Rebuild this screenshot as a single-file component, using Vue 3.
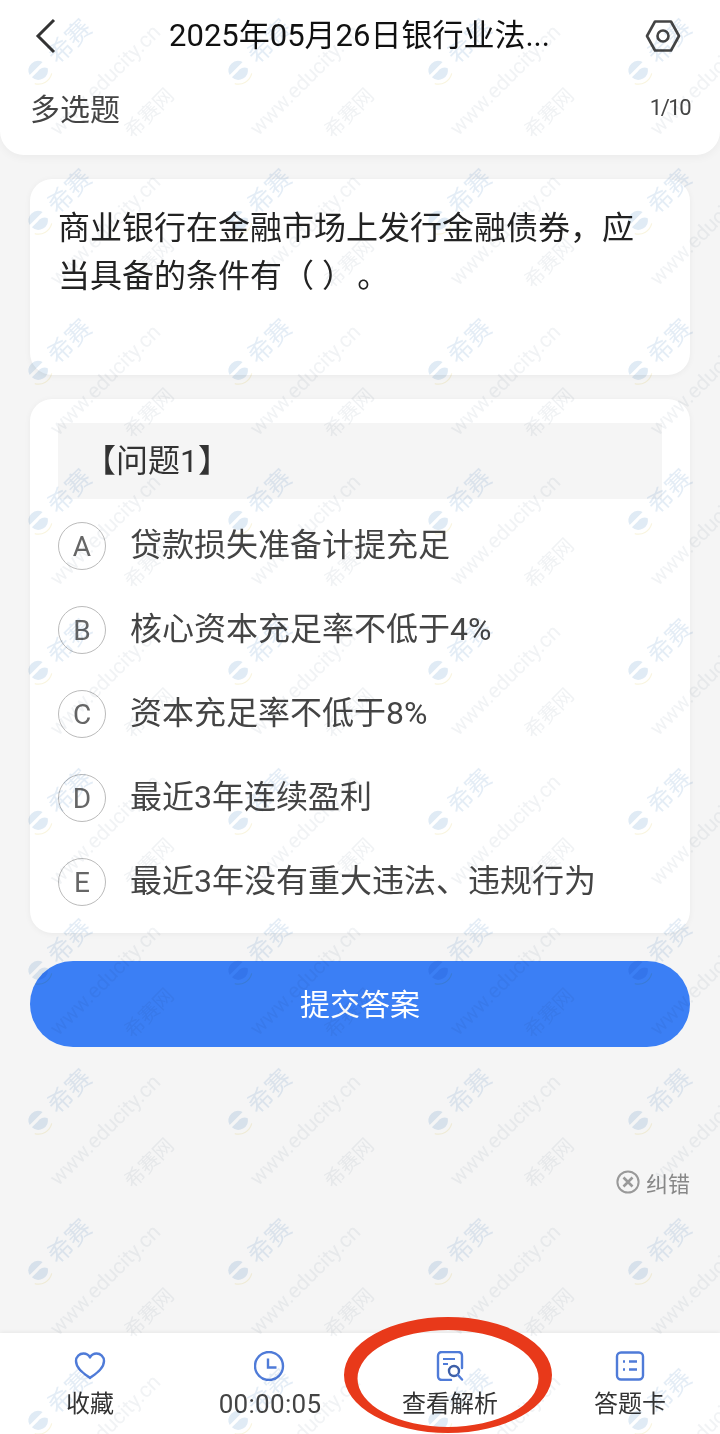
<script setup>
const options = [
  { key: 'A', text: '贷款损失准备计提充足' },
  { key: 'B', text: '核心资本充足率不低于4%' },
  { key: 'C', text: '资本充足率不低于8%' },
  { key: 'D', text: '最近3年连续盈利' },
  { key: 'E', text: '最近3年没有重大违法、违规行为' },
]
const tiles = Array.from({ length: 40 }, (_, i) => i)
</script>

<template>
  <div class="page">
    <header class="head">
      <div class="nav">
        <svg class="back" viewBox="0 0 24 36" width="24" height="36"><path d="M20 2 L4 18 L20 34" fill="none" stroke="#333" stroke-width="3"/></svg>
        <div class="title">2025年05月26日银行业法...</div>
        <svg class="gear" viewBox="0 0 36 34" width="36" height="34"><path d="M10 2.500 H26 L34 17 L26 31.500 H10 L2 17 Z" fill="none" stroke="#444" stroke-width="2.600" stroke-linejoin="round"/><circle cx="18" cy="17" r="5.500" fill="none" stroke="#444" stroke-width="2.600"/></svg>
      </div>
      <div class="meta">
        <span class="qtype">多选题</span>
        <span class="count">1/10</span>
      </div>
    </header>

    <main class="body">
      <section class="card question">商业银行在金融市场上发行金融债券，应当具备的条件有（  ）&#8202;。</section>

      <section class="card answers">
        <div class="sub">【问题1】</div>
        <div v-for="o in options" :key="o.key" class="opt">
          <span class="letter">{{ o.key }}</span>
          <span class="otext">{{ o.text }}</span>
        </div>
      </section>

      <button class="submit">提交答案</button>

      <div class="report">
        <svg viewBox="0 0 24 24" width="24" height="24"><circle cx="12" cy="12" r="10.600" fill="none" stroke="#999" stroke-width="2"/><path d="M7.500 7.500 L16.500 16.500 M16.500 7.500 L7.500 16.500" stroke="#999" stroke-width="2.600"/></svg>
        <span>纠错</span>
      </div>
    </main>

    <nav class="bar">
      <div class="tab">
        <svg viewBox="0 0 32 30" width="32" height="30"><path d="M16 27 C10 22.500 2 17.500 2 10 C2 5.500 5.500 2.500 9.500 2.500 C12.200 2.500 14.700 4 16 6.400 C17.300 4 19.800 2.500 22.500 2.500 C26.500 2.500 30 5.500 30 10 C30 17.500 22 22.500 16 27 Z" fill="none" stroke="#4f7bd8" stroke-width="2.400" stroke-linejoin="round"/></svg>
        <span>收藏</span>
      </div>
      <div class="tab">
        <svg viewBox="0 0 32 30" width="32" height="30"><circle cx="15" cy="15" r="14" fill="none" stroke="#4f7bd8" stroke-width="2.400"/><path d="M14 7.500 V16.500 H22.500" fill="none" stroke="#4f7bd8" stroke-width="2.400"/></svg>
        <span class="time">00:00:05</span>
      </div>
      <div class="tab">
        <svg viewBox="0 0 32 30" width="32" height="30"><path d="M17 29 H8 Q4 29 4 25 V5 Q4 1 8 1 H24 Q28 1 28 5 V17" fill="none" stroke="#4f7bd8" stroke-width="2.400" stroke-linecap="round"/><path d="M9 8 H21 M9 13 H14" stroke="#4f7bd8" stroke-width="2.200"/><circle cx="20" cy="20" r="5" fill="none" stroke="#3d5fa8" stroke-width="2.400"/><path d="M24 24 L28 28.500" stroke="#4f7bd8" stroke-width="2.400" stroke-linecap="round"/></svg>
        <span>查看解析</span>
      </div>
      <div class="tab">
        <svg viewBox="0 0 32 30" width="32" height="30"><rect x="3" y="1.500" width="26" height="27" rx="4" fill="none" stroke="#4f7bd8" stroke-width="2.400"/><path d="M9 10.500 H11 M15 10.500 H23 M9 18.500 H11 M15 18.500 H23" stroke="#4f7bd8" stroke-width="2.400"/></svg>
        <span>答题卡</span>
      </div>
    </nav>

    <div class="wm" aria-hidden="true">
      <div v-for="t in tiles" :key="t" class="tile">
        <svg class="wm-e" viewBox="0 0 40 40" width="32" height="32"><path d="M6 30 A17 17 0 0 0 30 36" fill="none" stroke="#f9f5e0" stroke-width="1.500"/><path d="M9 18 A12 12 0 0 1 32 18 Z" fill="#e0ebf5"/><path d="M9 22 H19 A10 10 0 0 1 31 28 A12 12 0 0 1 9 22 Z" fill="#e0ebf5"/></svg>
        <span class="wm-a">希赛</span>
        <span class="wm-b">www.educity.cn</span>
        <span class="wm-c">希赛网</span>
      </div>
    </div>

    <svg class="ring" viewBox="0 0 216 120" width="216" height="120" aria-hidden="true"><path fill="#e8391a" fill-rule="evenodd" d="M4 58 A104 58 0 1 1 212 58 A104 58 0 1 1 4 58 Z M17.500 61.500 A90.500 48.500 0 1 0 198.500 61.500 A90.500 48.500 0 1 0 17.500 61.500 Z"/></svg>
  </div>
</template>

<style>
html, body { margin: 0; background: #f5f5f5; }
</style>

<style scoped>
.page {
  position: relative;
  width: 720px;
  height: 1434px;
  overflow: hidden;
  display: flex;
  flex-direction: column;
  background: #f5f5f5;
  color: #333;
  font-family: Roboto, "Noto Sans CJK SC", sans-serif;
}
.head {
  height: 155px;
  box-sizing: border-box;
  background: #fff;
  border-radius: 0 0 24px 24px;
  box-shadow: 0 3px 8px rgba(0, 0, 0, .04);
  padding: 16px 30px 0;
}
.nav {
  height: 40px;
  display: flex;
  align-items: center;
  justify-content: space-between;
}
.back { margin-left: 4px; }
.title {
  font-size: 31px;
  line-height: 40px;
  color: #111;
  margin-left: 16px;
}
.gear { margin-right: 9px; }
.meta {
  display: flex;
  align-items: center;
  justify-content: space-between;
  height: 40px;
  margin-top: 31px;
}
.qtype { font-size: 30px; color: #444; }
.count { font-size: 22px; letter-spacing: -1.500px; color: #444; }
.body {
  flex: 1;
  padding: 24px 30px 0;
  display: flex;
  flex-direction: column;
}
.card {
  background: #fff;
  border-radius: 22px;
  box-shadow: 0 1px 6px rgba(0, 0, 0, .05);
}
.question {
  height: 196px;
  box-sizing: border-box;
  padding: 25px 28px 0;
  font-size: 32px;
  line-height: 48px;
  color: #222;
  white-space: pre-wrap;
}
.answers {
  height: 534px;
  box-sizing: border-box;
  margin-top: 24px;
  padding: 24px 28px 0;
}
.sub {
  height: 76px;
  background: #f5f5f5;
  font-size: 32px;
  line-height: 76px;
  padding-left: 26px;
  color: #333;
}
.opt {
  height: 84px;
  display: flex;
  align-items: center;
}
.sub + .opt { margin-top: 5px; }
.letter {
  width: 46px;
  height: 46px;
  border: 1.500px solid #bbb;
  border-radius: 50%;
  display: flex;
  align-items: center;
  justify-content: center;
  font-size: 28px;
  color: #666;
  flex: none;
}
.otext {
  font-size: 32px;
  color: #444;
  margin: 0 0 8px 24px;
  white-space: nowrap;
}
.submit {
  margin-top: 28px;
  height: 86px;
  border: 0;
  border-radius: 43px;
  background: #3b7ff5;
  color: #fff;
  font: inherit;
  font-size: 30px;
  padding-bottom: 6px;
}
.report {
  margin-top: 121px;
  align-self: flex-end;
  display: flex;
  align-items: center;
  gap: 6px;
  font-size: 22px;
  color: #888;
  height: 28px;
}
.bar {
  height: 101px;
  background: #fff;
  box-shadow: 0 -1px 4px rgba(0, 0, 0, .06);
  display: grid;
  grid-template-columns: 180px 180px 180px 180px;
}
.tab {
  display: flex;
  flex-direction: column;
  align-items: center;
  padding-top: 18px;
  font-size: 24px;
  line-height: 34px;
  color: #333;
}
.tab svg { margin-bottom: 6px; }
.time { font-size: 26px; letter-spacing: .3px; color: #444; }
.wm {
  position: absolute;
  inset: 0;
  display: grid;
  grid-template-columns: repeat(4, 200px);
  grid-auto-rows: 150px;
  pointer-events: none;
  mix-blend-mode: multiply;
}
.tile { position: relative; }
.tile span {
  position: absolute;
  white-space: nowrap;
  transform: translate(-50%, -50%) rotate(-45deg);
}
.wm-e { position: absolute; left: 21px; top: 54px; transform: rotate(-45deg); }
.wm-a { left: 68px; top: 40px; font-size: 25px; color: #e4edf6; }
.wm-b { left: 105px; top: 80px; font-size: 21px; color: #f1f3f5; }
.wm-c { left: 148px; top: 112px; font-size: 20px; color: #f0f2f4; }
.ring { position: absolute; left: 340px; top: 1317px; }
</style>
